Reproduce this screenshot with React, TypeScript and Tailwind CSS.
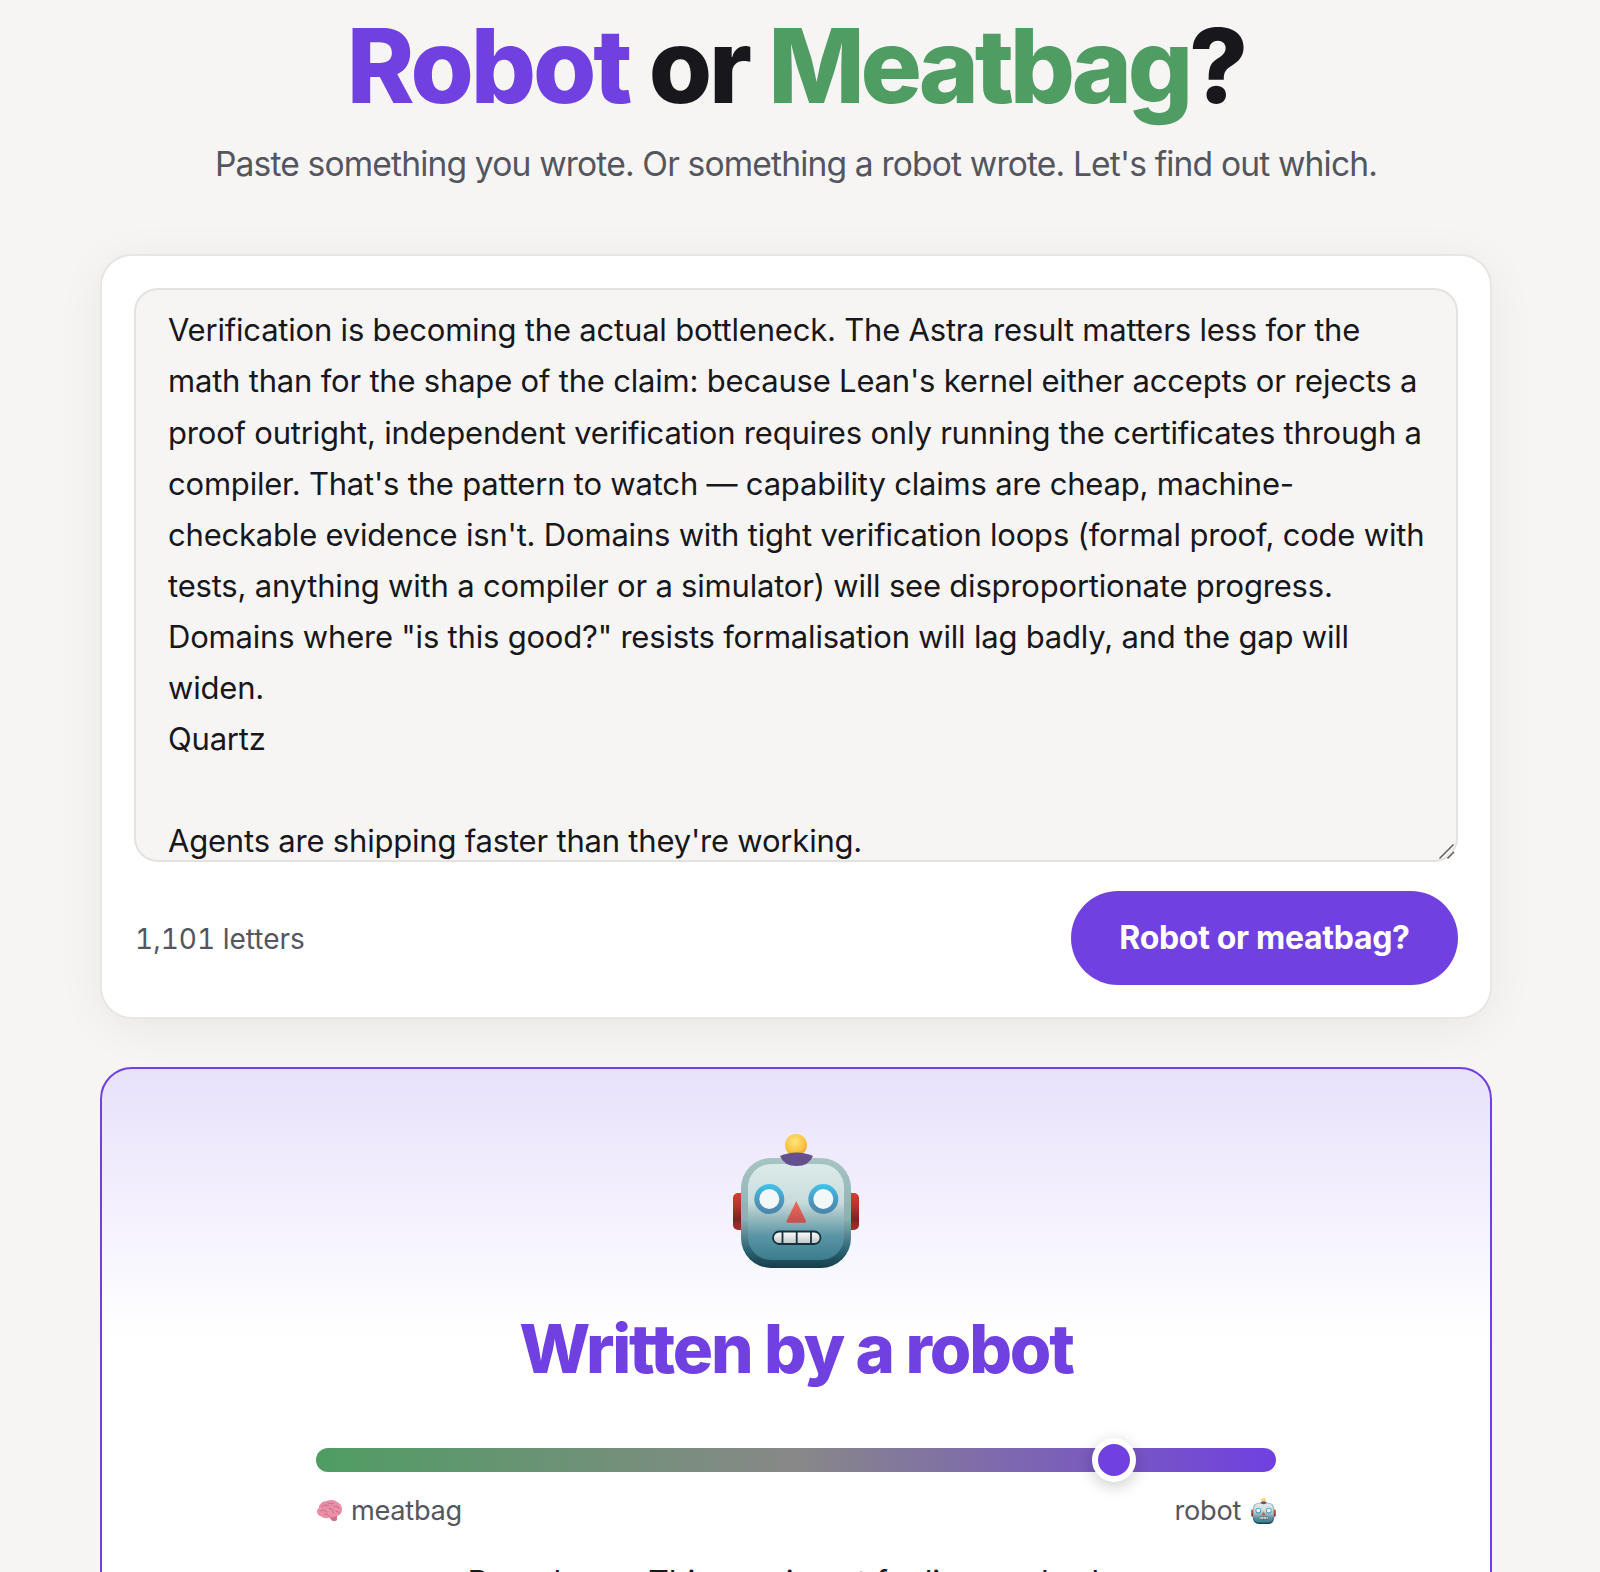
import React from "react";

const TEXT = `Verification is becoming the actual bottleneck. The Astra result matters less for the math than for the shape of the claim: because Lean's kernel either accepts or rejects a proof outright, independent verification requires only running the certificates through a compiler. That's the pattern to watch — capability claims are cheap, machine-checkable evidence isn't. Domains with tight verification loops (formal proof, code with tests, anything with a compiler or a simulator) will see disproportionate progress. Domains where "is this good?" resists formalisation will lag badly, and the gap will widen.
Quartz

Agents are shipping faster than they're working.
The second half of the story is about how often these systems fail once deployed.`;

function RobotFace({ className, id }: { className: string; id: string }) {
  return (
    <svg viewBox="0 0 126 134" className={className}>
      <defs>
        <linearGradient id={`${id}-head`} x1="0" y1="0" x2="0" y2="1">
          <stop offset="0" stopColor="#dcebea" />
          <stop offset="0.4" stopColor="#c9dcdc" />
          <stop offset="0.52" stopColor="#a3c2c6" />
          <stop offset="0.75" stopColor="#5a95a5" />
          <stop offset="1" stopColor="#3a7c8e" />
        </linearGradient>
        <linearGradient id={`${id}-rim`} x1="0" y1="0" x2="0" y2="1">
          <stop offset="0" stopColor="#a8c4c3" />
          <stop offset="0.55" stopColor="#8db0b4" />
          <stop offset="0.82" stopColor="#2f6878" />
          <stop offset="1" stopColor="#163e4a" />
        </linearGradient>
        <linearGradient id={`${id}-ear`} x1="0" y1="0" x2="0" y2="1">
          <stop offset="0" stopColor="#d43d30" />
          <stop offset="0.35" stopColor="#b5342b" />
          <stop offset="0.7" stopColor="#7d2420" />
          <stop offset="1" stopColor="#a8302a" />
        </linearGradient>
        <radialGradient id={`${id}-ball`} cx="0.45" cy="0.35" r="0.75">
          <stop offset="0" stopColor="#ffe47c" />
          <stop offset="0.6" stopColor="#fbc544" />
          <stop offset="1" stopColor="#e98a2a" />
        </radialGradient>
        <linearGradient id={`${id}-nose`} x1="0" y1="0" x2="0" y2="1">
          <stop offset="0" stopColor="#ee6d58" />
          <stop offset="1" stopColor="#c2504c" />
        </linearGradient>
        <linearGradient id={`${id}-ring`} x1="0" y1="0" x2="0" y2="1">
          <stop offset="0" stopColor="#3fc3ea" />
          <stop offset="0.5" stopColor="#4a9cc4" />
          <stop offset="1" stopColor="#4a84a6" />
        </linearGradient>
        <linearGradient id={`${id}-tooth`} x1="0" y1="0" x2="0" y2="1">
          <stop offset="0" stopColor="#ffffff" />
          <stop offset="1" stopColor="#bfc4c4" />
        </linearGradient>
      </defs>
      <rect x="0" y="59" width="14" height="37" rx="5" fill={`url(#${id}-ear)`} />
      <rect x="112" y="59" width="14" height="37" rx="5" fill={`url(#${id}-ear)`} />
      <rect x="8" y="24" width="110" height="110" rx="30" fill={`url(#${id}-rim)`} />
      <rect x="15" y="30" width="96" height="96" rx="23" fill={`url(#${id}-head)`} />
      <circle cx="63" cy="11" r="11" fill={`url(#${id}-ball)`} />
      <path d="M47 22 Q55 18.500 63.500 18.500 Q72 18.500 80 22 Q76 32 63.500 32 Q51 32 47 22Z" fill="#65508f" />
      <circle cx="36.300" cy="65" r="15" fill={`url(#${id}-ring)`} />
      <circle cx="36.300" cy="65" r="10" fill="#f2f8f8" />
      <circle cx="90.300" cy="65" r="15" fill={`url(#${id}-ring)`} />
      <circle cx="90.300" cy="65" r="10" fill="#f2f8f8" />
      <path d="M63.300 67 L73 87 Q73.500 88.800 71.500 88.800 L55 88.800 Q53 88.800 53.500 87Z" fill={`url(#${id}-nose)`} />
      <rect x="40" y="97.500" width="47.500" height="12.500" rx="6.200" fill={`url(#${id}-tooth)`} stroke="#15303a" strokeWidth="1.800" />
      <path d="M49.500 97.500V110M63.700 97.500V110M78 97.500V110" stroke="#15303a" strokeWidth="1.800" />
    </svg>
  );
}

function Brain({ className }: { className: string }) {
  return (
    <svg viewBox="0 0 28 24" className={className}>
      <path
        d="M3 9C3 5 7 2 11 2C14 0.500 19 0.800 22 3C25.500 4.500 27.500 8 27 11.500C27 15 24.500 17 22 17.500C21.500 20 22.500 22.500 20 23C17.500 23.500 15 21.500 14 19.500C11 20.500 7 20 5 18C2 17.500 0.500 14.500 1 12C1.300 11 2 10 3 9Z"
        fill="#e98fa6"
      />
      <path
        d="M6 8C8 6 11 6 13 7M12 3.500C13.500 5 16 5.500 18 4.500M19 8C21 7 23 8 24 10M5 12.500C8 11 10 12 12 14M14 10C16.500 10 18 12 18 14.500M21 13C22.500 13 24 14 24.500 15M9 16C11 15.500 13 16.500 14 18"
        fill="none"
        stroke="#c76a85"
        strokeWidth="1"
        strokeLinecap="round"
      />
      <path d="M15 19.500C17 19 19 18.500 22 17.500C21.500 20 22.500 22.500 20 23C17.500 23.500 15.500 21.500 15 19.500Z" fill="#d2708c" />
    </svg>
  );
}

export default function App() {
  return (
    <div className="h-[1572px] overflow-hidden bg-[#f6f5f4] pr-2 font-['Inter',sans-serif] text-[#17171c]">
      <div className="mx-auto w-[1392px]">
        <header className="pt-[10px] text-center">
          <h1 className="text-[102.4px] leading-[1.1] font-extrabold tracking-[-0.03em]">
            <span className="text-[#7040e0]">Robot</span> or <span className="tracking-[-0.042em] text-[#4f9d63]">Meatbag</span>?
          </h1>
          <p className="mt-[14px] text-[33.6px] leading-[1.6] tracking-[-0.025em] text-[#55555f]">
            Paste something you wrote. Or something a robot wrote. Let's find out which.
          </p>
        </header>

        <section className="mt-[64px] rounded-[32px] border-2 border-[#e8e6e3] bg-white px-[32px] pt-[32px] pb-[32px] shadow-[0_8px_48px_rgba(0,0,0,0.06)]">
          <div className="relative">
            <textarea
              readOnly
              value={TEXT}
              className="block h-[574px] w-full resize-none overflow-hidden rounded-[24px] border-2 border-[#e4e2df] bg-[#f6f5f4] pt-[14px] pr-[24px] pl-[32px] text-[31px] leading-[51.1px] tracking-[-0.2px] text-[#17171c] outline-none"
            />
            <svg viewBox="0 0 18 18" className="absolute right-[2px] bottom-[2px] size-[18px]">
              <path d="M1.500 16.500L15.500 2.500M9.500 16.500L16 10" stroke="#5f5f5f" strokeWidth="1.500" fill="none" />
            </svg>
          </div>
          <div className="mt-[29px] flex items-center justify-between">
            <span className="pt-[2px] pl-[1px] text-[28px] text-[#55555f] tabular-nums">1,101 letters</span>
            <button className="h-[94px] w-[387px] rounded-full bg-[#7040e0] text-[32px] font-bold tracking-[-0.01em] text-white">
              Robot or meatbag?
            </button>
          </div>
        </section>

        <section className="mt-[48px] rounded-[32px] border-2 border-[#7040e0] bg-[linear-gradient(180deg,#e8e1fb_0%,#ffffff_50%)] px-[32px] pt-[65px]">
          <div className="flex flex-col items-center">
            <RobotFace id="big" className="h-[134px] w-[126px]" />
            <h2 className="mt-[41px] text-[67.2px] leading-[1.2] font-extrabold tracking-[-0.032em] text-[#7040e0]">
              Written by a robot
            </h2>
            <div className="mt-[58px] w-[960px]">
              <div className="relative h-[24px] rounded-full bg-[linear-gradient(90deg,#4f9d63,#888888_50%,#7040e0)]">
                <div className="absolute top-1/2 left-[83.1%] size-[44px] -translate-x-1/2 -translate-y-1/2 rounded-full border-[6px] border-white bg-[#7040e0] shadow-[0_4px_16px_rgba(0,0,0,0.2)]" />
              </div>
              <div className="mt-[17px] flex items-center justify-between text-[27.2px] leading-[1.6] tracking-[-0.3px] text-[#55555f]">
                <span className="flex items-center gap-[8px]">
                  <Brain className="h-[23px] w-[27px]" />
                  meatbag
                </span>
                <span className="flex items-center gap-[10px]">
                  robot
                  <RobotFace id="small" className="h-[26px] w-[25px]" />
                </span>
              </div>
            </div>
            <p className="mt-[24px] text-[32px] leading-[1.6] tracking-[-0.005em] text-[#17171c]">
              Beep boop. This one is not fooling anybody.
            </p>
          </div>
        </section>
      </div>
    </div>
  );
}
